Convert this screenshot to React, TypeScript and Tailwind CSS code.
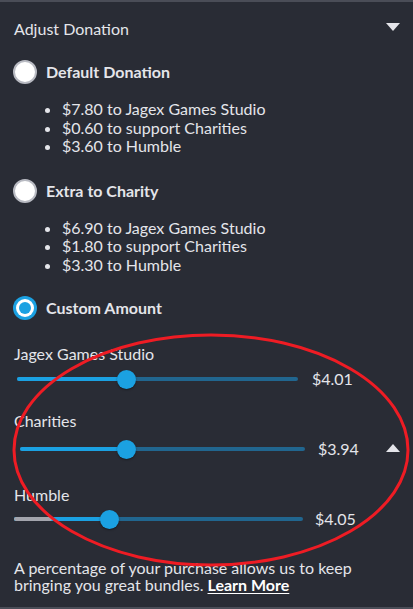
import React from 'react';

const font = { fontFamily: 'Lato, "Noto Sans", sans-serif' };

function Radio({ checked }: { checked?: boolean }) {
  if (checked) {
    return (
      <div className="w-6 h-6 rounded-full bg-[#1ba1e2] flex items-center justify-center shrink-0">
        <div className="w-[18px] h-[18px] rounded-full bg-white flex items-center justify-center">
          <div className="w-3 h-3 rounded-full bg-[#1ba1e2]" />
        </div>
      </div>
    );
  }
  return <div className="w-6 h-6 rounded-full bg-white border-2 border-[#b8bac2] shrink-0" />;
}

function Option({ label, checked, items }: { label: string; checked?: boolean; items?: string[] }) {
  return (
    <div>
      <div className="flex items-center gap-[9px] pl-[13px] h-6">
        <Radio checked={checked} />
        <span className="text-[16px] leading-6 font-bold text-[#e4e5ea]">{label}</span>
      </div>
      {items && (
        <ul className="list-disc pl-[62px] mt-[16px] text-[16px] leading-[18.5px] text-[#e4e5ea]">
          {items.map((t) => (
            <li key={t}>{t}</li>
          ))}
        </ul>
      )}
    </div>
  );
}

function Slider({
  label,
  value,
  left,
  width,
  pos,
  grey,
  valueGap,
  rowGap,
  caret,
}: {
  label: string;
  value: string;
  left: string;
  width: string;
  pos: number;
  grey?: number;
  valueGap: string;
  rowGap: string;
  caret?: boolean;
}) {
  return (
    <div className="pl-[14px]">
      <div className="text-[16px] text-[#e4e5ea] leading-5">{label}</div>
      <div className={`flex items-center h-7 ${left} ${rowGap}`}>
        <div className={`relative h-1 rounded-full bg-[#21668f] ${width}`}>
          <div
            className="absolute left-0 top-0 h-1 rounded-full bg-[#1ba1e2]"
            style={{ width: `${pos}%` }}
          />
          {grey ? (
            <div
              className="absolute left-0 top-0 h-1 rounded-full bg-[#a3a5ad]"
              style={{ width: `${grey}%` }}
            />
          ) : null}
          <div
            className="absolute top-1/2 w-[19px] h-[19px] -mt-[9.5px] -ml-[9.5px] rounded-full bg-[#1ba1e2] shadow-[0_1px_2px_rgba(0,0,0,0.4)]"
            style={{ left: `${pos}%` }}
          />
        </div>
        <span className={`text-[16px] text-[#e4e5ea] ${valueGap}`}>{value}</span>
        {caret && (
          <div className="ml-auto mr-[13px] -mt-[2px] w-0 h-0 border-l-[7.5px] border-r-[7.5px] border-b-[8px] border-l-transparent border-r-transparent border-b-[#e4e5ea]" />
        )}
      </div>
    </div>
  );
}

export default function App() {
  return (
    <div style={font} className="relative w-[413px] h-[609px] bg-[#292c35] border-t-2 border-[#4a4d57] overflow-hidden">
      <div className="flex items-center justify-between pl-[14px] pr-[13px] pt-[15px] h-[39px]">
        <span className="text-[16px] leading-6 text-[#e4e5ea]">Adjust Donation</span>
        <div className="w-0 h-0 border-l-[7px] border-r-[7px] border-t-[8px] border-l-transparent border-r-transparent border-t-[#e4e5ea] -mt-[5px]" />
      </div>

      <div className="mt-[19px] flex flex-col">
        <Option
          label="Default Donation"
          items={['$7.80 to Jagex Games Studio', '$0.60 to support Charities', '$3.60 to Humble']}
        />
        <div className="mt-[23px]">
          <Option
            label="Extra to Charity"
            items={['$6.90 to Jagex Games Studio', '$1.80 to support Charities', '$3.30 to Humble']}
          />
        </div>
        <div className="mt-[22px]">
          <Option label="Custom Amount" checked />
        </div>
      </div>

      <div className="mt-[24px] flex flex-col">
        <Slider label="Jagex Games Studio" value="$4.01" left="pl-[3px]" width="w-[281px]" pos={39} valueGap="ml-[14px]" rowGap="mt-[1px]" />
        <div className="mt-[18px]">
          <Slider label="Charities" value="$3.94" left="pl-[6px]" width="w-[285px]" pos={37.5} valueGap="ml-[13px]" rowGap="mt-[4px]" caret />
        </div>
        <div className="mt-[22px]">
          <Slider label="Humble" value="$4.05" left="pl-0" width="w-[289px]" pos={33} grey={13} valueGap="ml-[12px]" rowGap="mt-0" />
        </div>
      </div>

      <p className="mt-[26px] pl-[14px] w-[380px] text-[16px] leading-[17px] text-[#e4e5ea]">
        A percentage of your purchase allows us to keep bringing you great bundles.{' '}
        <span className="font-bold underline underline-offset-2 text-white">Learn More</span>
      </p>

      <div className="absolute left-0 right-0 bottom-0 h-[2px] bg-[#4a4d57]" />

      <svg className="absolute left-0 top-0 pointer-events-none" width="413" height="609">
        <ellipse cx="211" cy="448" rx="197" ry="115" fill="none" stroke="#ee1c24" strokeWidth="3" />
      </svg>
    </div>
  );
}
